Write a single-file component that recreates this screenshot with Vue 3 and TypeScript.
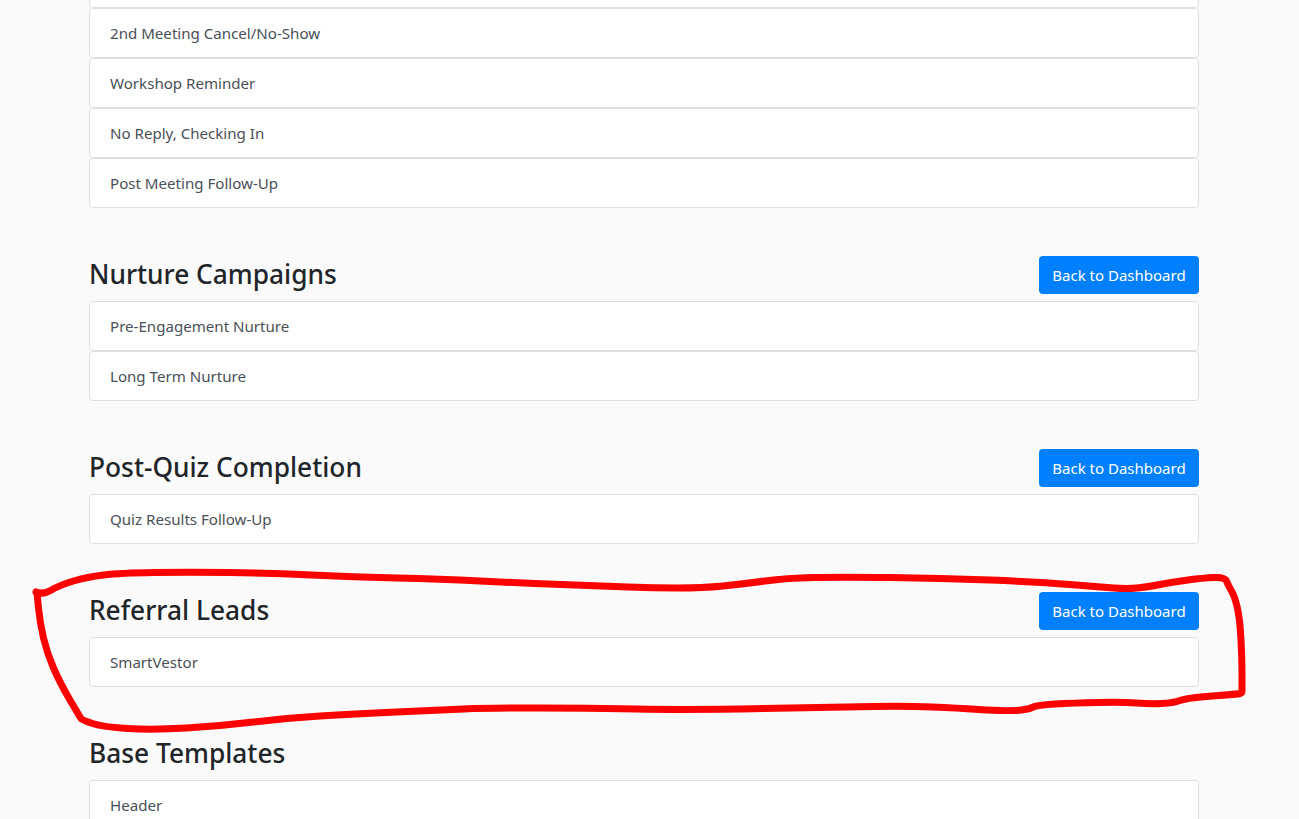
<script setup lang="ts">
interface Section {
  title: string;
  back: boolean;
  items: string[];
}

// the row above the fold has no readable label in the screenshot
const firstItems: string[] = ['', '2nd Meeting Cancel/No-Show', 'Workshop Reminder', 'No Reply, Checking In', 'Post Meeting Follow-Up'];

const sections: Section[] = [
  { title: 'Nurture Campaigns', back: true, items: ['Pre-Engagement Nurture', 'Long Term Nurture'] },
  { title: 'Post-Quiz Completion', back: true, items: ['Quiz Results Follow-Up'] },
  { title: 'Referral Leads', back: true, items: ['SmartVestor'] },
  { title: 'Base Templates', back: false, items: ['Header'] },
];

const outline: number[][] = [
  [36, 592], [43, 595], [60, 585], [87, 577], [120, 573], [187, 572], [270, 573], [353, 577], [440, 579],
  [520, 583], [603, 586], [653, 588], [703, 588], [743, 584], [787, 578], [840, 577], [940, 578], [1040, 582],
  [1100, 587], [1127, 589], [1147, 587], [1173, 582], [1203, 578], [1225, 577], [1228, 585], [1235, 597],
  [1240, 620], [1242, 660], [1242, 690], [1242, 693], [1238, 694], [1187, 698], [1173, 703], [1150, 704], [1123, 702], [1073, 703],
  [1037, 705], [1027, 710], [1000, 711], [957, 708], [907, 706], [840, 707], [687, 710], [587, 708], [487, 708],
  [440, 710], [353, 714], [287, 718], [220, 726], [153, 730], [103, 727], [82, 720], [80, 717], [60, 683],
  [47, 653], [40, 623], [37, 593],
];

// smooth the hand drawn line by curving through the midpoints
function smoothPath(points: number[][]): string {
  let d = `M${points[0][0]} ${points[0][1]}`;
  for (let i = 1; i < points.length - 1; i++) {
    const midX = (points[i][0] + points[i + 1][0]) / 2;
    const midY = (points[i][1] + points[i + 1][1]) / 2;
    d += ` Q${points[i][0]} ${points[i][1]} ${midX} ${midY}`;
  }
  const last = points[points.length - 1];
  return `${d} L${last[0]} ${last[1]}`;
}

const scribble = smoothPath(outline);
</script>

<template>
  <div class="page">
    <div class="container">
      <ul class="list-group">
        <li v-for="item in firstItems" :key="item" class="list-item">{{ item }}</li>
      </ul>
      <section v-for="section in sections" :key="section.title" class="section">
        <div class="section-head">
          <h2>{{ section.title }}</h2>
          <a v-if="section.back" href="#" class="btn">Back to Dashboard</a>
        </div>
        <ul class="list-group">
          <li v-for="item in section.items" :key="item" class="list-item">{{ item }}</li>
        </ul>
      </section>
    </div>
    <svg class="scribble" width="1299" height="819" viewBox="0 0 1299 819" fill="none">
      <path :d="scribble" stroke="#ff0000" stroke-width="7" stroke-linejoin="round" stroke-linecap="round" />
    </svg>
  </div>
</template>

<style>
html,
body {
  margin: 0;
  overflow: hidden;
}
</style>

<style scoped>
.page {
  position: relative;
  height: 819px;
  overflow: hidden;
  background: #fafafa;
  font-family: 'Noto Sans', 'Open Sans', sans-serif;
}
.container {
  width: 1110px;
  margin: -42px 0 0 89px;
}
.list-group {
  margin: 0;
  padding: 0;
  list-style: none;
}
.list-item {
  height: 50px;
  box-sizing: border-box;
  padding: 0 20px;
  display: flex;
  align-items: center;
  font-size: 15.1px;
  color: #495057;
  background: #fff;
  border: 1px solid #dfdfdf;
  border-radius: 4px;
}
.section {
  margin-top: 48px;
}
.section-head {
  height: 38px;
  margin-bottom: 7px;
  display: flex;
  justify-content: space-between;
  align-items: center;
}
h2 {
  margin: 0 0 2px;
  font-size: 26.3px;
  font-weight: 500;
  color: #212529;
}
.btn {
  width: 160px;
  height: 38px;
  display: flex;
  align-items: center;
  justify-content: center;
  font-size: 15px;
  color: #fff;
  background: #007fff;
  border-radius: 4px;
  text-decoration: none;
}
.scribble {
  position: absolute;
  top: 0;
  left: 0;
  pointer-events: none;
}
</style>
